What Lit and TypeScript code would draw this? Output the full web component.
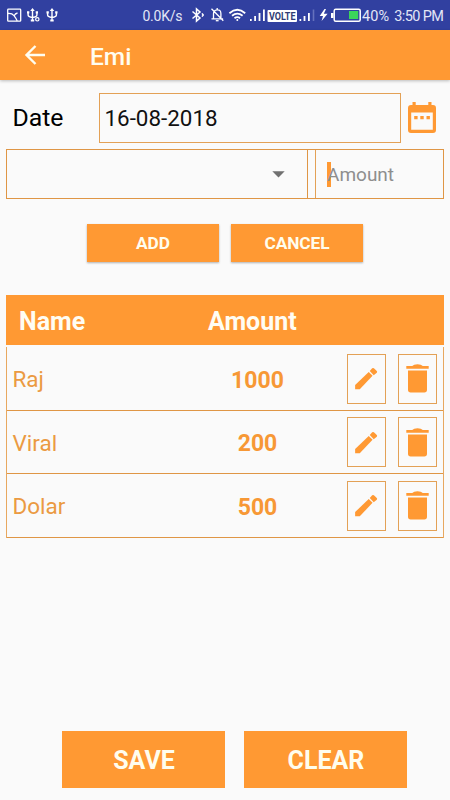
import { LitElement, html, css, svg } from "lit";
import { customElement, property } from "lit/decorators.js";

const entries = [
  { name: "Raj", amount: 1000 },
  { name: "Viral", amount: 200 },
  { name: "Dolar", amount: 500 },
];

@customElement("status-bar")
class StatusBar extends LitElement {
  static styles = css`
    :host { display: block; height: 30px; background: #3140a0; }
    svg { display: block; }
    text { font-family: Roboto, sans-serif; fill: #e3e6f6; }
    .volte { fill: #303d75; }
  `;
  render() {
    const usb = (x: number) => svg`
      <g transform="translate(${x} 0)" fill="none" stroke="#fff" stroke-width="1.4">
        <path d="M6 10V21M1.600 12.500v2.600q0 2 4.400 2.400q4.400-.4 4.400-2.400v-2.600"/>
        <path d="M6 8l2.300 3H3.700zM4.300 19.500h3.400v2.100H4.300zM.500 11.300h2.300v2.300H.5zM9.200 11.300h2.300v2.300H9.200z" fill="#fff" stroke="none"/>
      </g>`;
    return html`<svg width="450" height="30" viewBox="0 0 450 30">
      <g fill="none" stroke="#fff" stroke-width="1.3">
        <rect x="7.700" y="9.200" width="13" height="12" rx=".8"/>
        <path d="M8 13.500q4-.3 6 2.200t3.200 5.300M14.300 15.500q1-2 3.200-2.500"/>
      </g>
      ${usb(26.5)}
      <circle cx="37.300" cy="19.300" r="1.700" fill="#3140a0" stroke="#fff" stroke-width="1.200"/>
      ${usb(46)}
      <text x="142.500" y="20.600" font-size="14" textLength="40">0.0K/s</text>
      <path d="M192.500 11.500l7.500 6.500-3.500 3V9l3.500 3-7.500 6.500M202 13.400l1.200 1.600-1.200 1.600" fill="none" stroke="#fff" stroke-width="1.500"/>
      <g fill="none" stroke="#fff" stroke-width="1.300">
        <path d="M213.500 18.800v-5q0-3.700 3.700-4t3.700 4v5M211.500 18.800h11.600M211.500 8.800l11.800 12M217.200 8v2"/>
        <path d="M215.800 20.700h2.800"/>
      </g>
      <g fill="none" stroke="#fff" stroke-width="1.800">
        <path d="M229.400 13.200q7.900-6.800 15.800 0M232 15.800q5.300-4.400 10.600 0M234.500 18.200q2.800-2 5.600 0"/>
        <circle cx="237.300" cy="20" r="1" fill="#fff" stroke="none"/>
      </g>
      <path d="M250 19h1.700v2H250zM254.200 16h1.800v5h-1.800zM258.600 13h1.800v8h-1.800zM263 9.500h1.800V21H263z" fill="#fff"/>
      <rect x="267.500" y="10" width="29.500" height="12" rx="1" fill="#fff"/>
      <text class="volte" x="269" y="19.800" font-size="10.500" font-weight="700" textLength="26.500" lengthAdjust="spacingAndGlyphs">VOLTE</text>
      <path d="M299.500 19h1.700v2h-1.700zM303.600 16h1.800v5h-1.800zM308 13h1.800v8H308z" fill="#fff"/>
      <path d="M312.700 9.500h1.600V21h-1.600z" fill="#6571bd"/>
      <path d="M324.500 9l-4.800 7h3.300l-1.400 5 6-7.300h-3.800l2.200-4.700z" fill="#fff"/>
      <rect x="334.200" y="9.200" width="26" height="12" rx="1.500" fill="none" stroke="#fff" stroke-width="1.500"/>
      <path d="M331 13h2.500v5H331z" fill="#fff"/>
      <rect x="349" y="11" width="9.200" height="8" fill="#3bd45a"/>
      <text x="362" y="20.600" font-size="14.500" textLength="27">40%</text>
      <text x="394.300" y="20.600" font-size="14.500" textLength="49.500">3:50 PM</text>
    </svg>`;
  }
}

@customElement("entry-row")
class EntryRow extends LitElement {
  @property() name = "";
  @property({ type: Number }) amount = 0;
  static styles = css`
    :host { box-sizing: border-box; display: flex; align-items: center; height: 63.600px; padding: 1px 6px 0 5.500px;
      border-bottom: 1px solid #df9645; color: #eb9a42; font: 22.500px Roboto, sans-serif; }
    .name { width: 180px; padding-top: 1px; }
    .amount { font-weight: 700; font-size: 23px; text-align: center; width: 130px; color: #f79835; padding-top: 3px; }
    .tool { box-sizing: border-box; width: 39px; height: 50px; border: 1px solid #e3a156; display: flex; align-items: center; justify-content: center; }
    .edit { margin-left: auto; margin-right: 12px; }
    svg { display: block; fill: #ff9933; }
  `;
  render() {
    return html`
      <span class="name">${this.name}</span>
      <span class="amount">${this.amount}</span>
      <div class="tool edit"><svg width="25" height="25" viewBox="0 0 26 26">
        <path d="M1.200 19.800L15.300 6.200L19.300 10.200L6 24.200H1.200z"/><path d="M16.400 5.100l2.500-2.700q.9-.8 1.800 0l3 2.900q.7.900 0 1.700l-3.200 2.700z"/>
      </svg></div>
      <div class="tool"><svg width="23" height="29" viewBox="0 0 23 29">
        <path d="M.3 2h5.900Q7.700.3 11.500.3T16.800 2h5.900v2.800H.3zM2 6.500h19v19.300q0 2.700-2.700 2.700H4.700q-2.700 0-2.700-2.700z"/>
      </svg></div>`;
  }
}

@customElement("app-root")
class AppRoot extends LitElement {
  static styles = css`
    :host { display: flex; flex-direction: column; height: 800px; background: #fafafa; font-family: Roboto, sans-serif; overflow: hidden; }
    .appbar { height: 50px; flex: none; background: #ff9933; color: #fffdf0; display: flex; align-items: center; box-shadow: 0 1px 3px rgba(0,0,0,.25); }
    .appbar svg { margin-left: 24px; }
    .title { margin-left: 44px; font-size: 24.500px; font-weight: 500; line-height: 50px; padding-top: 3px; }
    .date { display: flex; align-items: center; height: 50px; margin-top: 12.500px; padding-left: 12.500px; }
    .label { width: 86px; font-size: 24.800px; color: #000; }
    .field { box-sizing: border-box; width: 302.500px; height: 50px; border: 1px solid #e3a156; padding-left: 5px;
      font-size: 22.400px; line-height: 49px; color: #111; }
    .date svg { margin-left: 6px; }
    .inputs { box-sizing: border-box; display: flex; height: 50px; margin: 6.500px 6px 0; border: 1px solid #df9645; }
    .select { box-sizing: border-box; width: 301px; border-right: 1px solid #df9645; display: flex; align-items: center; justify-content: flex-end; padding-right: 22px; }
    .value { box-sizing: border-box; flex: 1; margin-left: 7px; border-left: 1px solid #e3a156; display: flex; align-items: center; padding-left: 11px; font-size: 19px; color: #8e8e8e; }
    .cursor { width: 3.500px; height: 25px; background: #ff9933; margin-right: -3.500px; }
    .hint { position: relative; }
    .actions { display: flex; justify-content: center; gap: 12px; margin-top: 24.500px; }
    .action { width: 132px; height: 38px; background: #ff9933; color: #fffdee; font-weight: 700; font-size: 17.300px; letter-spacing: -.1px; line-height: 39px; text-align: center; box-shadow: 0 1px 2px rgba(0,0,0,.3); }
    .head { display: flex; height: 50px; margin: 33.500px 6px 0; background: #ff9933; color: #fffdf3; font-size: 25px; font-weight: 700; line-height: 53px; flex: none; }
    .head-name { width: 189px; padding-left: 13px; }
    .rows { margin: 2px 6px 0; border: solid #e8a85f; border-width: 0 1px; }
    .bottom { margin-top: auto; margin-bottom: 12.500px; display: flex; justify-content: center; gap: 19px; padding-left: 19px; }
    .big { box-sizing: border-box; width: 163px; height: 56.500px; padding-left: 1px; background: #ff9933; color: #fffdee; font-size: 25px; font-weight: 700; line-height: 60px; text-align: center; }
  `;
  render() {
    return html`
      <status-bar></status-bar>
      <div class="appbar">
        <svg width="22" height="22" viewBox="0 0 22 22" fill="none" stroke="#fffdf0" stroke-width="2.400"><path d="M21 11H3M11.500 2L2.500 11l9 9"/></svg>
        <div class="title">Emi</div>
      </div>
      <div class="date">
        <div class="label">Date</div>
        <div class="field">16-08-2018</div>
        <svg width="30" height="33" viewBox="0 0 30 33">
          <path d="M5.500 1h3.200v3h12.600V1h3.200v3H26q3 0 3 3v22q0 3-3 3H4q-3 0-3-3V7q0-3 3-3h1.500zM4.200 11.500V28.800h21.600V11.500z" fill="#ff9933" fill-rule="evenodd"/>
          <path d="M7.200 15h3.400v3.200H7.200zM13.300 15h3.400v3.200h-3.400zM19.500 15h3.400v3.200h-3.400z" fill="#ff9933"/>
        </svg>
      </div>
      <div class="inputs">
        <div class="select"><svg width="13" height="7" viewBox="0 0 13 7"><path d="M.3.300h12.400L6.500 6.500z" fill="#707070"/></svg></div>
        <div class="value"><div class="cursor"></div><span class="hint">Amount</span></div>
      </div>
      <div class="actions"><div class="action">ADD</div><div class="action">CANCEL</div></div>
      <div class="head"><div class="head-name">Name</div><div>Amount</div></div>
      <div class="rows">${entries.map((e) => html`<entry-row .name=${e.name} .amount=${e.amount}></entry-row>`)}</div>
      <div class="bottom"><div class="big">SAVE</div><div class="big">CLEAR</div></div>`;
  }
}
